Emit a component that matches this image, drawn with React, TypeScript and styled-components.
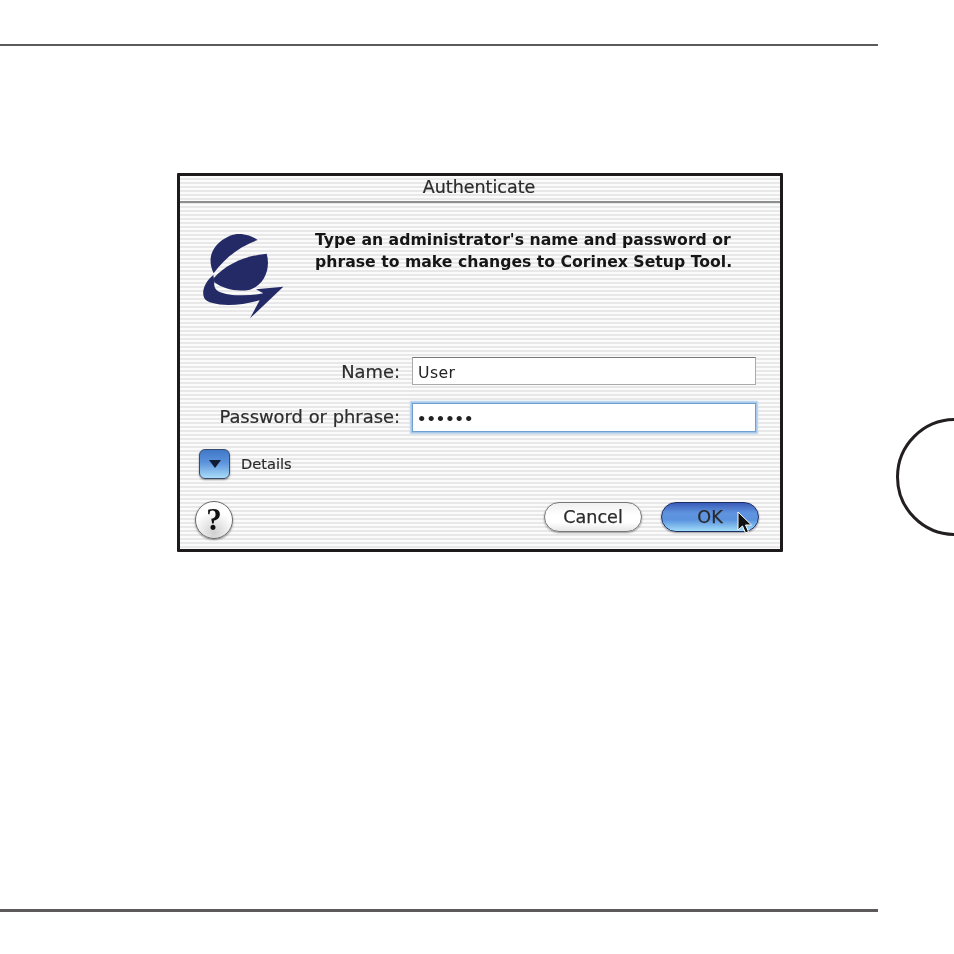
import React from "react";
import styled, { createGlobalStyle } from "styled-components";

const Global = createGlobalStyle`
  html, body { margin: 0; padding: 0; background: #fff; }
  body { font-family: "DejaVu Sans", "Liberation Sans", sans-serif; }
`;

const Page = styled.div`
  position: relative;
  width: 954px;
  height: 954px;
  overflow: hidden;
  background: #fff;
  display: flex;
  flex-direction: column;
`;

const Rule = styled.div<{ $h: number; $top: number }>`
  width: 878px;
  height: ${(p) => p.$h}px;
  margin-top: ${(p) => p.$top}px;
  background: #5c5a5a;
  flex: none;
`;

const ChapterTab = styled.div`
  position: absolute;
  left: 896px;
  top: 418px;
  width: 112px;
  height: 112px;
  border: 3px solid #231f20;
  border-radius: 50%;
`;

const Dialog = styled.section`
  flex: none;
  box-sizing: border-box;
  width: 606px;
  height: 379px;
  margin: 127px 0 0 177px;
  border: 3px solid #1c1a1a;
  border-radius: 1px;
  background: repeating-linear-gradient(
    to bottom,
    #fbfbfb 0,
    #fbfbfb 2px,
    #e8e8e8 2px,
    #e8e8e8 4px
  );
  display: flex;
  flex-direction: column;
  filter: blur(0.45px);
`;

const TitleBar = styled.header`
  box-sizing: border-box;
  height: 27px;
  flex: none;
  border-bottom: 2px solid #8e8e8e;
  display: flex;
  align-items: center;
  justify-content: center;
  font-size: 17.5px;
  color: #2a2a2a;
  -webkit-text-stroke: 0.2px #2a2a2a;
  padding: 0 2px 3px 0;
`;

const Content = styled.div`
  flex: 1;
  display: flex;
  flex-direction: column;
  padding: 0 21px 10px 15px;
  min-height: 0;
`;

const Intro = styled.div`
  display: flex;
  align-items: flex-start;
  height: 154px;
  flex: none;
`;

const Logo = styled.svg`
  width: 100px;
  height: 100px;
  margin: 22px 0 0 0;
  flex: none;
`;

const Message = styled.p`
  margin: 26px 0 0 20px;
  font-size: 15.7px;
  line-height: 22px;
  font-weight: 700;
  color: #161616;
  white-space: nowrap;
`;

const FieldRow = styled.div<{ $gap: number }>`
  display: flex;
  align-items: center;
  justify-content: flex-end;
  gap: 12px;
  margin: 0 3px ${(p) => p.$gap}px 0;
  flex: none;
`;

const Label = styled.label<{ $lift?: number }>`
  font-size: 17.9px;
  color: #2c2c2c;
  white-space: nowrap;
  -webkit-text-stroke: 0.2px #2c2c2c;
  padding-bottom: ${(p) => p.$lift ?? 0}px;
`;

const Field = styled.div<{ $focus?: boolean }>`
  box-sizing: border-box;
  width: 344px;
  height: ${(p) => (p.$focus ? 29 : 28)}px;
  background: #fff;
  padding: 2px 0 0 5px;
  display: flex;
  align-items: center;
  font-size: 15.7px;
  color: #222;
  letter-spacing: 0.4px;
  border: 1px solid #aaa;
  border-top-color: #777;
  ${(p) =>
    p.$focus &&
    `
    border: 1px solid #6f9fd0;
    box-shadow: 0 0 0 1.5px #a9c8e8, 0 0 2px 2px #c6dcf1;
    padding: 1px 0 0 4px;
    font-size: 14.7px;
    font-weight: 700;
    letter-spacing: 0;
  `}
`;

const DetailsRow = styled.div`
  display: flex;
  align-items: center;
  gap: 11px;
  margin: 0 0 0 4px;
  flex: none;
`;

const Disclosure = styled.div`
  box-sizing: border-box;
  width: 31px;
  height: 30px;
  border-radius: 6px;
  border: 1.5px solid #3a4a68;
  background: linear-gradient(to bottom, #3f78c8 0%, #5c93dc 45%, #a9dcf8 100%);
  box-shadow: 0 1px 2px rgba(0, 0, 0, 0.4);
  display: flex;
  align-items: center;
  justify-content: center;
`;

const DetailsText = styled.span`
  font-size: 14.6px;
  color: #2a2a2a;
  -webkit-text-stroke: 0.15px #2a2a2a;
  padding-bottom: 2px;
`;

const Footer = styled.footer`
  margin-top: auto;
  display: flex;
  align-items: flex-end;
  justify-content: space-between;
`;

const HelpButton = styled.div`
  box-sizing: border-box;
  width: 38px;
  height: 38px;
  border-radius: 50%;
  border: 1.5px solid #6a6a6a;
  background: radial-gradient(circle at 50% 85%, #d0d0d0 0%, #fff 60%);
  box-shadow: 0 1px 2px rgba(0, 0, 0, 0.45);
  display: flex;
  align-items: center;
  justify-content: center;
  font-family: "Liberation Serif", serif;
  font-weight: 700;
  font-size: 31px;
  color: #111;
`;

const Buttons = styled.div`
  display: flex;
  gap: 19px;
  margin-bottom: 7px;
`;

const Pill = styled.div<{ $primary?: boolean }>`
  position: relative;
  box-sizing: border-box;
  width: 98px;
  height: 30px;
  border-radius: 15px;
  display: flex;
  align-items: center;
  justify-content: center;
  font-size: 17.6px;
  color: #2a2a2a;
  -webkit-text-stroke: 0.25px #2a2a2a;
  border: 1.5px solid ${(p) => (p.$primary ? "#1f2f66" : "#777")};
  background: ${(p) =>
    p.$primary
      ? "linear-gradient(to bottom, #3a5cb8 0%, #5f93de 35%, #5b93df 60%, #9fdcf8 100%)"
      : "linear-gradient(to bottom, #f0f0f0 0%, #fff 45%, #fff 70%, #e6e6e6 100%)"};
  box-shadow: 0 1px 2px rgba(0, 0, 0, 0.4);
`;

const Cursor = styled.svg`
  position: absolute;
  left: 74px;
  top: 8px;
  width: 18px;
  height: 24px;
`;

export default function App() {
  return (
    <Page>
      <Global />
      <Rule $h={2} $top={44} />
      <Dialog>
        <TitleBar>Authenticate</TitleBar>
        <Content>
          <Intro>
            <Logo viewBox="0 0 300 300" aria-label="Corinex logo">
              <g fill="#232a66">
                <path d="M56 145C36 105 46 58 105 32C130 22 165 28 188 45C135 64 90 98 56 145Z" />
                <path d="M215 86C228 130 208 180 165 194C125 202 85 192 58 172L56 160C90 120 150 92 215 86Z" />
                <path d="M55 150C30 170 18 200 28 220C40 242 120 248 194 226L165 280L265 185L183 193L205 205C160 214 100 213 72 200C60 193 56 185 58 170Z" />
              </g>
            </Logo>
            <Message>
              Type an administrator's name and password or
              <br />
              phrase to make changes to Corinex Setup Tool.
            </Message>
          </Intro>
          <FieldRow $gap={18}>
            <Label>Name:</Label>
            <Field>User</Field>
          </FieldRow>
          <FieldRow $gap={17}>
            <Label $lift={2}>Password or phrase:</Label>
            <Field $focus>••••••</Field>
          </FieldRow>
          <DetailsRow>
            <Disclosure>
              <svg width="14" height="10" viewBox="0 0 14 10">
                <path d="M1 1H13L7 9Z" fill="#111a33" />
              </svg>
            </Disclosure>
            <DetailsText>Details</DetailsText>
          </DetailsRow>
          <Footer>
            <HelpButton>?</HelpButton>
            <Buttons>
              <Pill>Cancel</Pill>
              <Pill $primary>
                OK
                <Cursor viewBox="0 0 18 24">
                  <path
                    d="M2 1V19L6.5 15L9.5 22L12.5 20.5L9.5 14H15.5Z"
                    fill="#111"
                    stroke="#fff"
                    strokeWidth="1"
                  />
                </Cursor>
              </Pill>
            </Buttons>
          </Footer>
        </Content>
      </Dialog>
      <Rule $h={3} $top={357} />
      <ChapterTab />
    </Page>
  );
}
